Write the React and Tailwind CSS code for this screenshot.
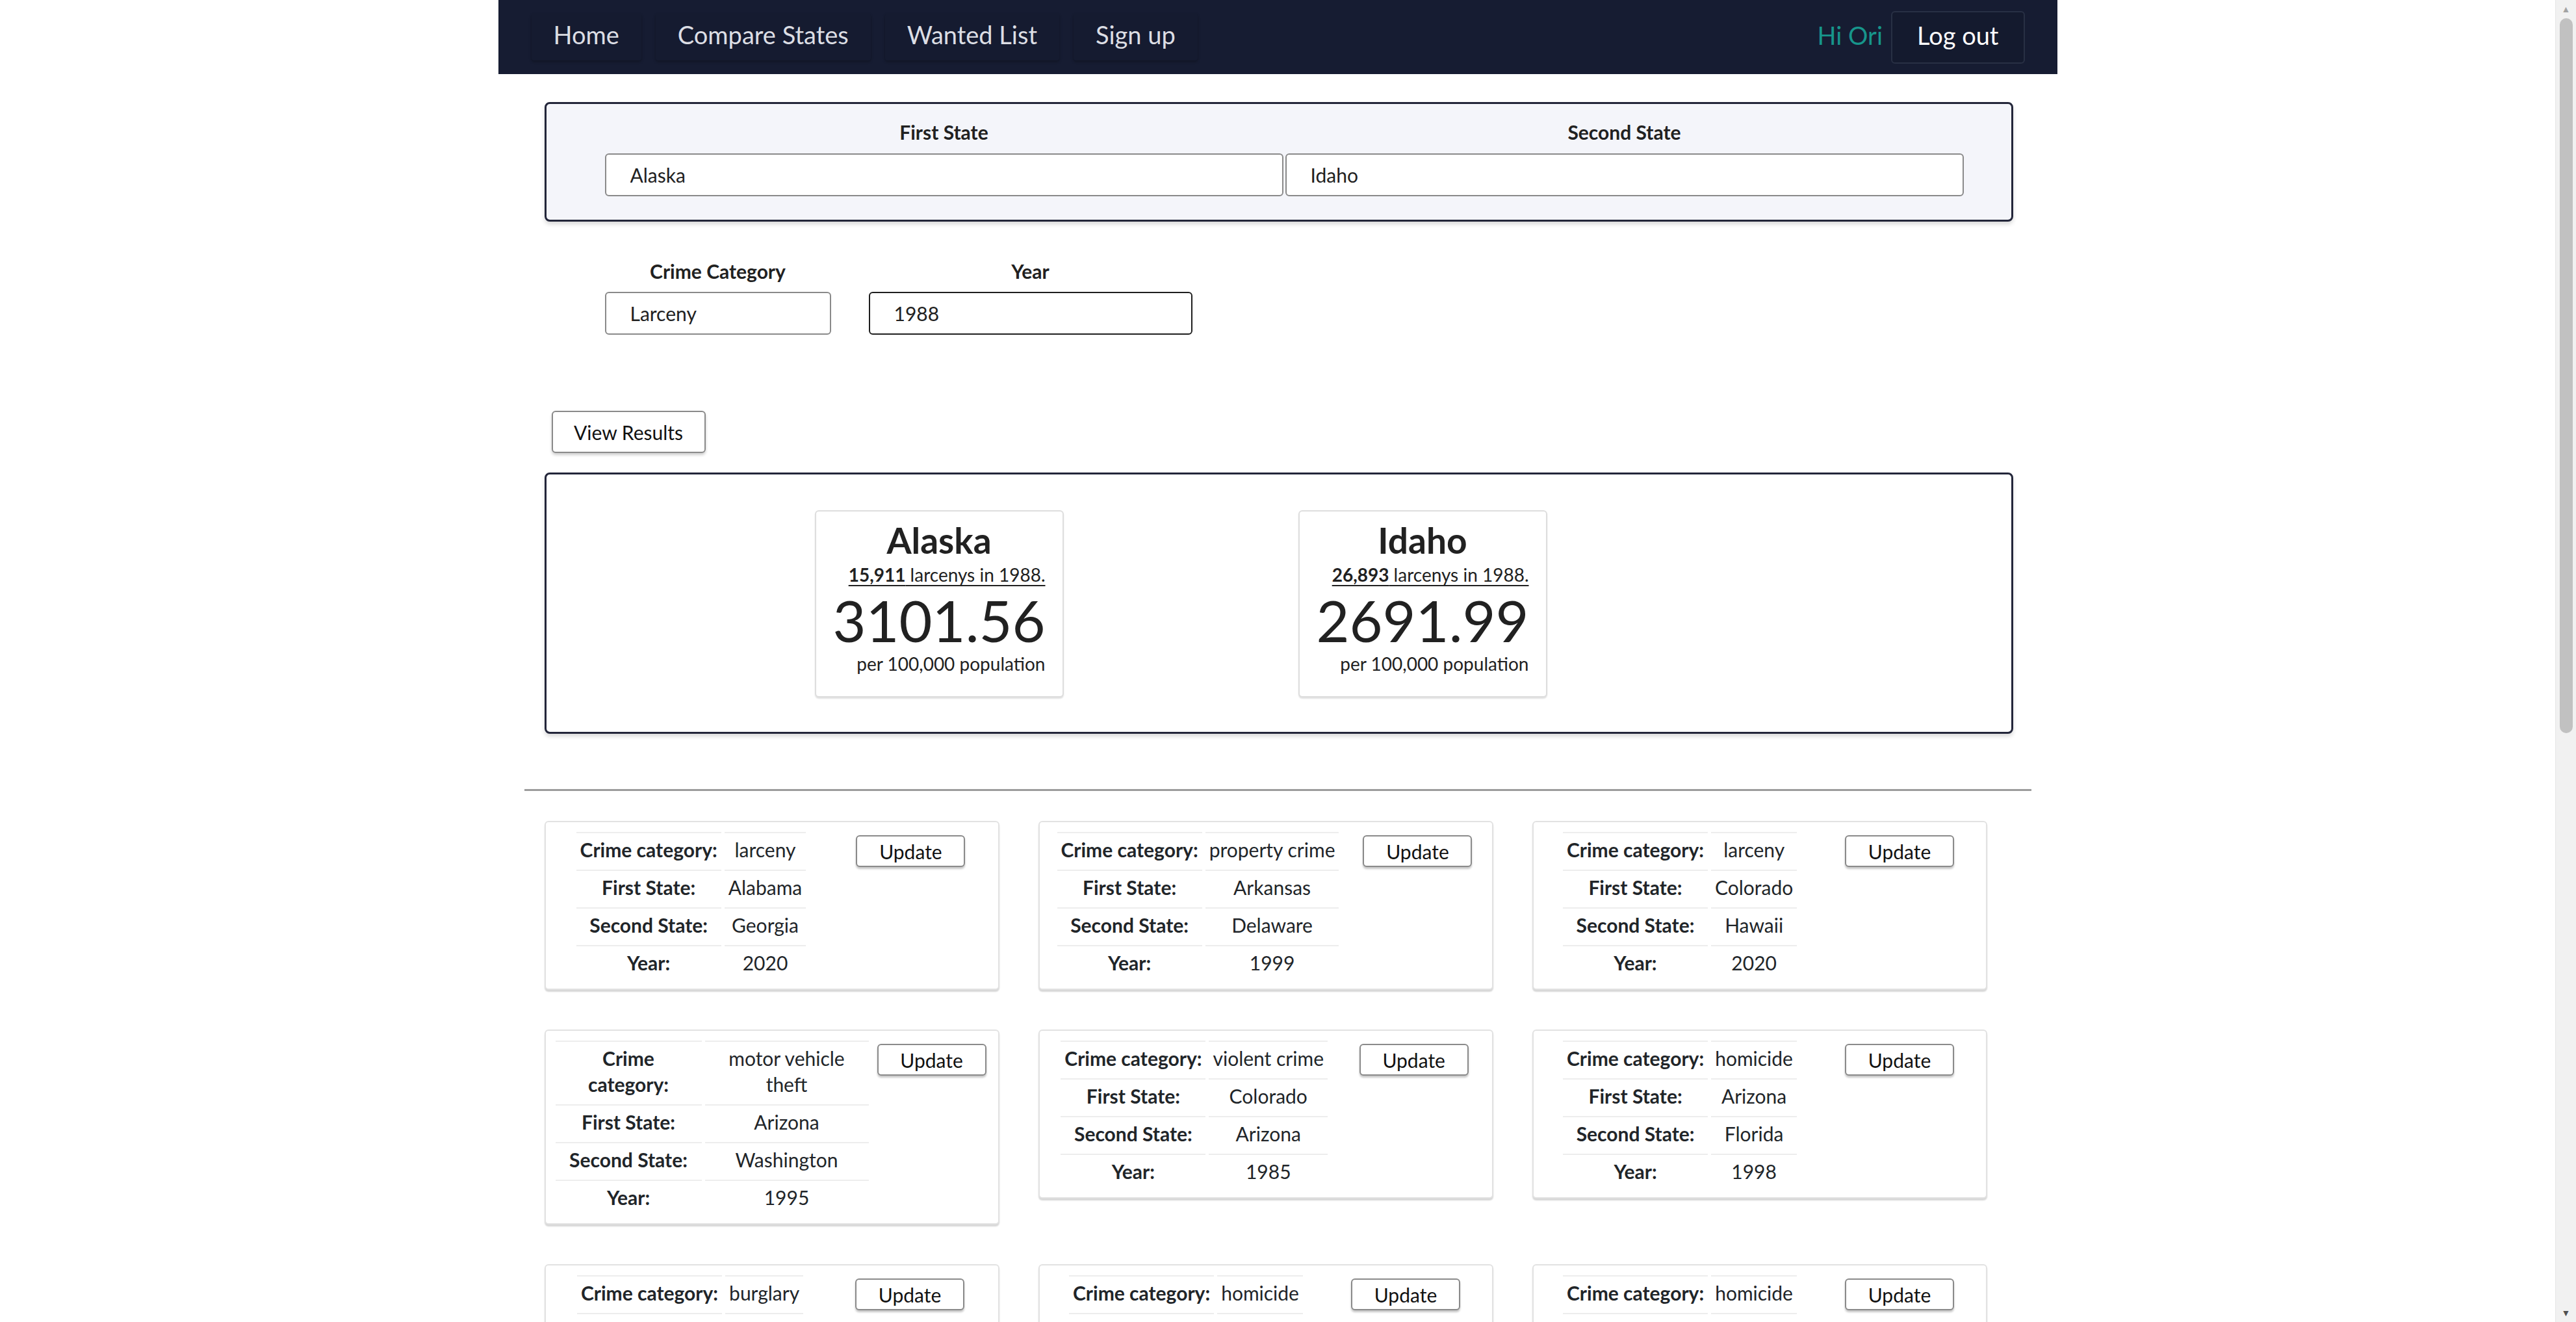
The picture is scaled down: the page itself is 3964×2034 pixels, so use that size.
import React from "react";

const saved = [
  { cat: "larceny", first: "Alabama", second: "Georgia", year: 2020 },
  { cat: "property crime", first: "Arkansas", second: "Delaware", year: 1999 },
  { cat: "larceny", first: "Colorado", second: "Hawaii", year: 2020 },
  { cat: "motor vehicle theft", first: "Arizona", second: "Washington", year: 1995, wrap: true },
  { cat: "violent crime", first: "Colorado", second: "Arizona", year: 1985 },
  { cat: "homicide", first: "Arizona", second: "Florida", year: 1998 },
  { cat: "burglary", first: "Alaska", second: "Idaho", year: 2001 },
  { cat: "homicide", first: "Alabama", second: "Texas", year: 2010 },
  { cat: "homicide", first: "Arizona", second: "Nevada", year: 1990 },
];

const results = [
  { state: "Alaska", count: "15,911", rate: "3101.56" },
  { state: "Idaho", count: "26,893", rate: "2691.99" },
];

const cell = "border-t-2 border-[#ededed] px-[6px] pt-[5px] pb-[11px] leading-[40px] text-center align-middle";

const Row = ({ label, value }) => (
  <tr>
    <th className={`${cell} font-bold`}>{label}</th>
    <td className={cell}>{value}</td>
  </tr>
);

const SavedCard = ({ item }) => (
  <div className="w-[700px] rounded-[6px] border-2 border-[#e2e2e2] shadow-[0_3px_2px_rgba(0,0,0,0.16)] bg-white pt-[15px] pb-[9px] px-[6px] flex items-start justify-around">
    <table
      className={`border-separate border-spacing-x-[5px] border-spacing-y-0 ${
        item.wrap ? "table-fixed w-[487px] shrink-0" : ""
      }`}
    >
      {item.wrap ? (
        <colgroup>
          <col className="w-[225px]" />
          <col className="w-[252px]" />
        </colgroup>
      ) : null}
      <tbody>
        {item.wrap ? (
          <tr>
            <th className={`${cell} font-bold`}>
              Crime
              <br />
              category:
            </th>
            <td className={cell}>
              motor vehicle
              <br />
              theft
            </td>
          </tr>
        ) : (
          <Row label="Crime category:" value={item.cat} />
        )}
        <Row label="First State:" value={item.first} />
        <Row label="Second State:" value={item.second} />
        <Row label="Year:" value={item.year} />
      </tbody>
    </table>
    <button className="mt-[5px] mr-[8px] w-[168px] h-[49px] shrink-0 rounded-[6px] border-2 border-[#8a8a8a] bg-white shadow-[0_3px_3px_rgba(0,0,0,0.22)] text-[30px] text-[#111]">
      Update
    </button>
  </div>
);

const ResultCard = ({ r }) => (
  <div className="w-[383px] h-[288px] rounded-[6px] border-2 border-[#dedede] shadow-[0_2px_2px_rgba(0,0,0,0.12)] bg-white pt-[14px] flex flex-col items-center">
    <h2 className="text-[55px] leading-[60px] font-bold text-[#212121]">{r.state}</h2>
    <div className="text-right text-[#212121]">
      <p className="mt-[6px] text-[28px] leading-[34px] underline underline-offset-[5px]">
        <span className="font-bold">{r.count}</span> larcenys in 1988.
      </p>
      <p className="mt-[3px] text-[88px] leading-[100px]">{r.rate}</p>
      <p className="text-[28px] leading-[34px]">per 100,000 population</p>
    </div>
  </div>
);

export default function App() {
  return (
    <div className="min-h-screen bg-white text-[#212529] text-[30px] leading-[40px] font-['Lato','Noto_Sans',sans-serif]">
      <div className="w-[3932px]">
        <div className="w-[2399px] mx-auto">
          <nav className="h-[114px] bg-[#161c32] flex items-center justify-between pl-[51px] pr-[50px]">
            <div className="flex items-center gap-[22px]">
              {["Home", "Compare States", "Wanted List", "Sign up"].map((t) => (
                <a
                  key={t}
                  className="h-[72px] px-[34px] pb-[8px] flex items-center rounded-[4px] bg-[#151b30] shadow-[0_2px_4px_rgba(0,0,0,0.3)] text-[38px] text-[#dcdee4]"
                >
                  {t}
                </a>
              ))}
            </div>
            <div className="flex items-center gap-[13px]">
              <span className="pb-[6px] text-[38px] text-[#17958b]">Hi Ori</span>
              <button className="h-[81px] px-[38px] pb-[6px] rounded-[6px] border-2 border-[#283044] bg-[#141a2e] text-[38px] text-white">
                Log out
              </button>
            </div>
          </nav>

          <main className="pl-[71px] pr-[68px]">
            <section className="mt-[43px] rounded-[8px] border-[3px] border-[#23263a] bg-[#f4f5fa] shadow-[0_4px_6px_rgba(0,0,0,0.15)] pt-[25px] pb-[36px] pl-[90px] pr-[73px] grid grid-cols-2 gap-x-[3px]">
              {[
                ["First State", "Alaska"],
                ["Second State", "Idaho"],
              ].map(([label, val]) => (
                <div key={label} className="flex flex-col items-center">
                  <label className="text-[30px] leading-[36px] font-bold mb-[15px] text-[#212121]">{label}</label>
                  <input
                    readOnly
                    value={val}
                    className="w-full h-[66px] rounded-[6px] border-2 border-[#8a8a8a] bg-white pl-[37px] text-[30px] text-[#212121] outline-none"
                  />
                </div>
              ))}
            </section>

            <section className="mt-[58px] ml-[93px] flex gap-[58px]">
              <div className="w-[348px] flex flex-col items-center">
                <label className="text-[30px] leading-[36px] font-bold mb-[14px] text-[#212121]">Crime Category</label>
                <input
                  readOnly
                  value="Larceny"
                  className="w-full h-[66px] rounded-[6px] border-2 border-[#8a8a8a] bg-white pl-[37px] text-[30px] text-[#212121] outline-none"
                />
              </div>
              <div className="w-[498px] flex flex-col items-center">
                <label className="text-[30px] leading-[36px] font-bold mb-[14px] text-[#212121]">Year</label>
                <input
                  readOnly
                  value="1988"
                  className="w-full h-[66px] rounded-[6px] border-2 border-[#1e1e1e] bg-white pl-[37px] text-[30px] text-[#212121] outline-none"
                />
              </div>
            </section>

            <button className="mt-[117px] ml-[11px] w-[237px] h-[65px] rounded-[6px] border-2 border-[#8a8a8a] bg-white shadow-[0_3px_4px_rgba(0,0,0,0.2)] text-[30px] text-[#111]">
              View Results
            </button>

            <section className="mt-[30px] h-[402px] rounded-[8px] border-[3px] border-[#23263a] bg-white shadow-[0_4px_6px_rgba(0,0,0,0.15)] pt-[55px] pl-[413px] flex gap-[361px]">
              {results.map((r) => (
                <ResultCard key={r.state} r={r} />
              ))}
            </section>
          </main>

          <hr className="mt-[85px] mx-[40px] border-0 border-t-[3px] border-[#9c9c9c]" />

          <section className="mt-[46px] pl-[71px] flex flex-wrap items-start gap-x-[60px] gap-y-[61px] pb-[60px]">
            {saved.map((item, i) => (
              <SavedCard key={i} item={item} />
            ))}
          </section>
        </div>
      </div>

      {/* page scrollbar as shown in the screenshot */}
      <div className="fixed top-0 right-0 h-screen w-[32px] bg-[#f1f1f1] border-l border-[#e6e6e6] flex flex-col items-center">
        <div className="h-[28px] flex items-center justify-center text-[14px] leading-none text-[#a3a3a3]">▲</div>
        <div className="w-[20px] h-[1100px] rounded-[10px] bg-[#c1c1c1]" />
        <div className="flex-1" />
        <div className="h-[28px] flex items-center justify-center text-[14px] leading-none text-[#505050]">▼</div>
      </div>
    </div>
  );
}
